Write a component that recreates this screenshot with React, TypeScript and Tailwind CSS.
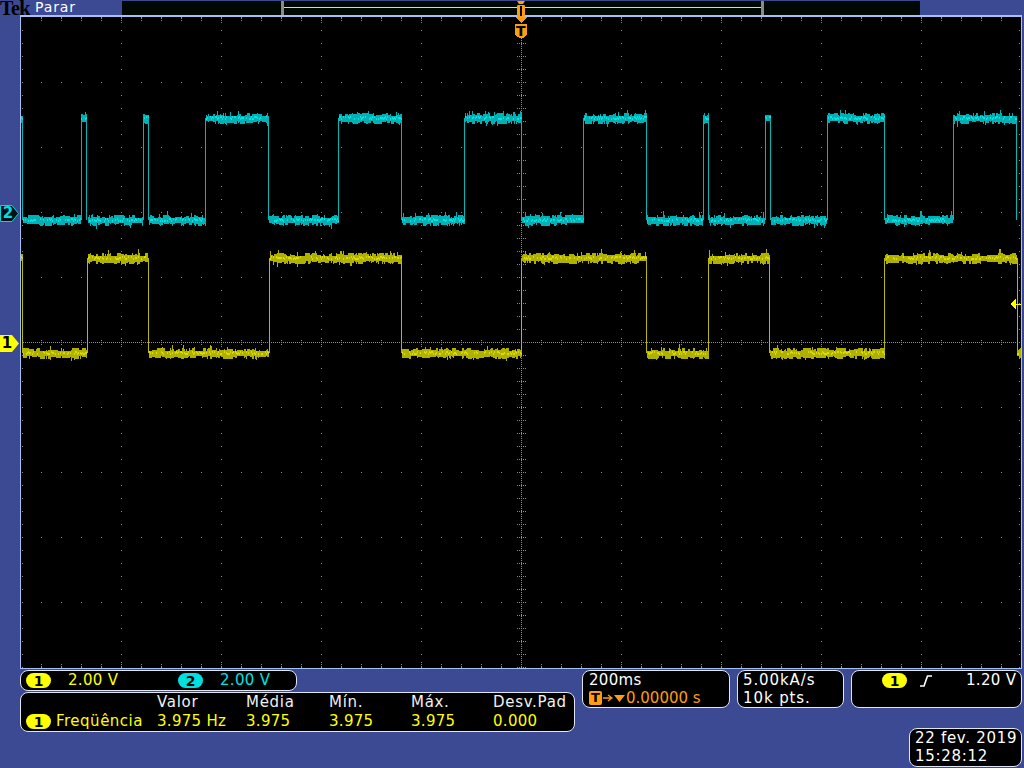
import React from "react"

// seeded so the noise on the traces is the same on every load
let seed = 12345
function rnd() {
  seed = (seed * 1664525 + 1013904223) % 4294967296
  return seed / 4294967296
}

type Seg = [number, number, number]

const cyanSegs: Seg[] = [
  [21, 22, 118], [23, 80, 220], [81, 86, 118], [88, 142, 220], [143, 148, 118], [149, 205, 220],
  [206, 268, 118], [269, 338, 220], [339, 401, 118], [402, 464, 220], [465, 521, 118],
  [522, 583, 220], [584, 646, 118], [647, 702, 220], [703, 708, 118], [709, 764, 220],
  [765, 770, 118], [771, 826, 220], [827, 884, 118], [885, 952, 220], [953, 1016, 118],
]
const cyanEdges: [number, number, number][] = [
  [22, 118, 220], [81, 118, 220], [86, 118, 220], [143, 118, 220], [148, 118, 220], [205, 118, 220],
  [268, 118, 220], [338, 118, 220], [401, 118, 220], [464, 118, 220], [521, 118, 220], [583, 118, 220],
  [646, 118, 220], [703, 118, 220], [708, 118, 220], [765, 118, 220], [770, 118, 220], [827, 118, 220],
  [884, 118, 220], [953, 118, 220], [1016, 118, 220],
]
const yellowSegs: Seg[] = [
  [21, 22, 258], [23, 86, 353], [88, 147, 258], [149, 268, 353], [270, 401, 258], [402, 521, 353],
  [522, 646, 258], [647, 708, 353], [709, 769, 258], [770, 884, 353], [885, 1016, 258], [1017, 1020, 353],
]
const yellowEdges: [number, number, number][] = [
  [22, 258, 353], [87, 258, 353], [148, 258, 353], [269, 258, 353], [401, 258, 353], [521, 258, 353],
  [646, 258, 353], [708, 258, 353], [769, 258, 353], [884, 258, 353], [1017, 258, 353],
]

function noise(segs: Seg[]) {
  let dim = ""
  let bright = ""
  for (const [a, b, c] of segs) {
    let up = 3
    let down = 3
    for (let x = a; x <= b; x++) {
      const x1 = x + 0.5
      // hold the envelope for a couple of columns, the trace looks blocky
      if (rnd() < 0.5) {
        up = 2 + Math.floor(rnd() * 4)
        down = 3 + Math.floor(rnd() * 4)
      }
      dim += `M${x1} ${c - up}V${c + down}`
      if (rnd() < 0.06) dim += `M${x1} ${c - up - 2 - Math.floor(rnd() * 3)}V${c - up}`
      if (rnd() < 0.05) dim += `M${x1} ${c + down}V${c + down + 1 + Math.floor(rnd() * 3)}`
      if (rnd() < 0.6) {
        const off = Math.floor(rnd() * 3) - 1
        bright += `M${x1} ${c - 1 + off}V${c + 1 + off}`
      }
    }
  }
  return { dim, bright }
}

const cyan = noise(cyanSegs)
const yellow = noise(yellowSegs)

function edges(list: [number, number, number][]) {
  return list.map(([x, t, b]) => `M${x + 0.5} ${t}V${b}`).join("")
}

function dots() {
  let d = ""
  const dot = (x: number, y: number) => {
    d += `M${x} ${y}h1v1h-1z`
  }
  // major rows and columns
  for (let y = 17; y <= 668; y += 65) for (let x = 41; x < 1021; x += 20) dot(x, y)
  for (let x = 121; x < 1021; x += 100) for (let y = 30; y < 668; y += 13) dot(x, y)
  // frame ticks
  for (let x = 41; x < 1021; x += 20) {
    const long = (x - 21) % 100 === 0
    for (let i = 0; i < (long ? 3 : 2); i++) {
      dot(x, 18 + i * 2)
      dot(x, 666 - i * 2)
    }
  }
  for (let y = 30; y < 668; y += 13) {
    dot(22, y)
    dot(1019, y)
  }
  // centre cross
  for (let y = 18; y < 668; y += 2) dot(521, y)
  for (let x = 23; x < 1020; x += 2) dot(x, 342)
  for (let y = 43; y < 668; y += 13) {
    if (y === 342) continue
    dot(517, y); dot(519, y); dot(523, y); dot(525, y)
  }
  for (let x = 41; x < 1021; x += 20) {
    dot(x, 340); dot(x, 344)
    if ((x - 21) % 100 === 0) {
      dot(x, 338); dot(x, 346)
    }
  }
  return d
}
const gridDots = dots()

function Badge({ n, cyanBg }: { n: string; cyanBg?: boolean }) {
  return (
    <span className={`flex items-center justify-center w-[25px] h-[15px] rounded-full text-black font-bold text-[14px] leading-none tracking-normal ${cyanBg ? "bg-[#00e0e0]" : "bg-[#ffff00]"}`}>
      {n}
    </span>
  )
}

function Panel({ className, children }: { className: string; children: React.ReactNode }) {
  return <div className={`bg-black border border-[#dfe6f5] rounded-[8px] ${className}`}>{children}</div>
}

const measures = [
  ["Valor", "3.975 Hz"],
  ["Média", "3.975"],
  ["Mín.", "3.975"],
  ["Máx.", "3.975"],
  ["Desv.Pad", "0.000"],
]

export default function App() {
  return (
    <div className="w-[1024px] h-[768px] overflow-hidden flex flex-col bg-[#3c4a94] text-[15px] tracking-[0.3px] font-['DejaVu_Sans',sans-serif] relative">
      {/* top bar */}
      <div className="h-[15px] flex shrink-0">
        <div className="w-[122px] flex items-center">
          <span className="w-[35px] mt-[1px] text-black font-bold text-[20px] leading-[15px] tracking-[-0.6px] font-['Liberation_Serif',serif]">Tek</span>
          <span className="text-white text-[14px] tracking-[0.9px] leading-[15px]">Parar</span>
        </div>
        <div className="w-[798px] mt-[1px] bg-[#000804] pl-[159px]">
          <div className="w-[483px] h-full border-x-[3px] border-[#8a8a8a] flex items-center">
            <div className="w-full h-[1px] mb-[1px] bg-[#f0f000]" />
          </div>
        </div>
      </div>

      {/* trigger position marker in the record bar */}
      <svg className="absolute left-[512px] top-0" width="18" height="17" viewBox="0 0 18 17">
        <path d="M5 1h8l-2 3H7z" fill="#ff9c10" />
        <rect x="5" y="5" width="8" height="12" rx="1" fill="#ff9c10" />
        <rect x="8" y="6" width="2" height="10" fill="#000" />
      </svg>

      {/* screen */}
      <div className="flex h-[654px] shrink-0">
        <div className="w-[20px] relative">
          <div className="absolute left-0 top-[190px] w-[20px] h-[17px]">
            <svg className="absolute inset-0" width="20" height="17" viewBox="0 0 20 17">
              <path d="M0.5 0.5H12L18.5 8.5L12 16.5H0.5Z" fill="#001018" stroke="#00d8d8" />
            </svg>
            <span className="absolute left-[2px] top-0 w-[12px] text-center text-[15px] leading-[17px] tracking-normal font-bold text-[#00e0e0]">2</span>
          </div>
          <div className="absolute left-0 top-[320px] w-[20px] h-[17px]">
            <svg className="absolute inset-0" width="20" height="17" viewBox="0 0 20 17">
              <path d="M0 0H12L19 8.5L12 17H0Z" fill="#ffff00" />
            </svg>
            <span className="absolute left-[1px] top-0 w-[12px] text-center text-[15px] leading-[17px] tracking-normal font-bold text-black">1</span>
          </div>
        </div>
        <div className="w-[1002px] h-[654px] border-l border-r border-t-2 border-b border-[#a4c0f4] bg-black">
          <svg width="1000" height="651" viewBox="21 17 1000 651" className="block" shapeRendering="crispEdges">
            <path d={gridDots} fill="#8f8f78" />
            <path d={edges(yellowEdges)} stroke="#b8b800" strokeWidth="1" fill="none" />
            <path d={yellow.dim} stroke="#b0b000" strokeWidth="1" fill="none" />
            <path d={yellow.bright} stroke="#dcdc00" strokeWidth="1" fill="none" />
            <path d={edges(cyanEdges)} stroke="#00b8b8" strokeWidth="1" fill="none" />
            <path d={cyan.dim} stroke="#00b0b4" strokeWidth="1" fill="none" />
            <path d={cyan.bright} stroke="#00e4e4" strokeWidth="1" fill="none" />
            {/* trigger level */}
            <path d="M1010 304L1016 299V309Z" fill="#ffff00" />
            <rect x="1016" y="304" width="5" height="1" fill="#ffff00" />
            {/* trigger marker */}
            <path d="M515 17H528L521.5 23Z" fill="#ff9c10" />
            <path d="M517 24H526Q527 24 527 25V35L521.5 39L515 35V25Q515 24 516 24Z" fill="#ff9c10" />
            <text x="521" y="36" textAnchor="middle" fontSize="14" fontWeight="700" fill="#000" fontFamily="DejaVu Sans">T</text>
          </svg>
        </div>
      </div>

      {/* readouts */}
      <div className="flex pl-[20px] pt-[1px]">
        <div className="w-[555px] flex flex-col gap-px">
          <Panel className="w-[277px] h-[21px] flex items-center pl-[5px]">
            <Badge n="1" />
            <span className="ml-[17px] w-[110px] text-[#ffff00]">2.00 V</span>
            <Badge n="2" cyanBg />
            <span className="ml-[17px] text-[#00e0e0]">2.00 V</span>
          </Panel>
          <Panel className="h-[40px] grid grid-cols-[136px_89px_83px_82px_82px_1fr] grid-rows-[19px_19px] leading-[19px]">
            <span />
            {measures.map(([label]) => (
              <span key={label} className="text-[#f0f0f0] tracking-[0.7px]">{label}</span>
            ))}
            <span className="flex items-center pl-[5px] text-[#ffff00]">
              <Badge n="1" />
              <span className="ml-[5px] tracking-[0.5px]">Freqüência</span>
            </span>
            {measures.map(([label, value]) => (
              <span key={label} className="text-[#ffff00]">{value}</span>
            ))}
          </Panel>
        </div>

        <div className="ml-[7px] w-[440px] flex flex-col items-end">
          <div className="flex gap-[7px]">
            <Panel className="w-[148px] h-[38px] pl-[6px] leading-[18px] text-white">
              <div>200ms</div>
              <div className="flex items-center text-[#ff9c10]">
                <span className="w-[13px] h-[14px] rounded-[2px] bg-[#ff9c10] text-black font-bold text-[13px] leading-[14px] text-center tracking-normal">T</span>
                <svg width="10" height="8" viewBox="0 0 10 8" className="ml-[1px]">
                  <path d="M0 4H8M5 1L9 4L5 7" stroke="#ff9c10" strokeWidth="1.3" fill="none" />
                </svg>
                <svg width="11" height="7" viewBox="0 0 11 7" className="ml-[1px]">
                  <path d="M0 0H11L5.5 7Z" fill="#ff9c10" />
                </svg>
                <span className="ml-[1px] tracking-[0px]">0.00000 s</span>
              </div>
            </Panel>
            <Panel className="w-[107px] h-[38px] pl-[5px] leading-[18px] text-white tracking-[0.9px]">
              <div>5.00kA/s</div>
              <div>10k pts.</div>
            </Panel>
            <Panel className="w-[171px] h-[38px] flex items-start pt-[2px] pl-[30px] leading-[15px] text-white">
              <Badge n="1" />
              <svg width="12" height="12" viewBox="0 0 12 12" className="ml-[13px] mt-[2px]">
                <path d="M0 11H4L7.5 1H12" stroke="#fff" strokeWidth="1.6" fill="none" />
              </svg>
              <span className="ml-[34px]">1.20 V</span>
            </Panel>
          </div>
          <Panel className="w-[113px] h-[39px] mt-[20px] pl-[5px] leading-[18px] text-white whitespace-nowrap tracking-[0.7px]">
            <div>22 fev. 2019</div>
            <div>15:28:12</div>
          </Panel>
        </div>
      </div>
    </div>
  )
}
